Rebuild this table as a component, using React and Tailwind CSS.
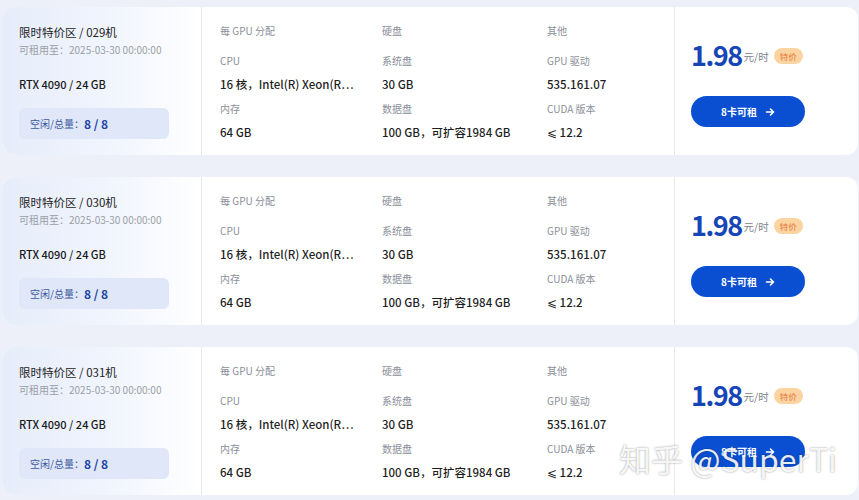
import React from 'react';

const cards = [
  { id: '029' },
  { id: '030' },
  { id: '031' },
];

function Spec({ label, value, className = '' }) {
  return (
    <div className={className}>
      <div className="text-[10px] leading-[14px] text-[#8b909a]">{label}</div>
      <div className="mt-[8px] text-[11.5px] leading-[16px] font-medium text-[#1f1f1f] whitespace-nowrap">{value}</div>
    </div>
  );
}

function MachineCard({ id }) {
  return (
    <div className="h-[148px] flex bg-white rounded-xl overflow-hidden">
      {/* left: machine info */}
      <div className="w-[199px] shrink-0 border-r border-[#e6e8ef] bg-gradient-to-r from-[#e6edfa] via-[#f0f4fd] to-white pl-4 pt-[17px] flex flex-col">
        <div className="text-[11.5px] leading-[16px] text-[#222]">限时特价区 / {id}机</div>
        <div className="mt-[3px] text-[10px] leading-[14px] text-[#9a9ea6]">可租用至：2025-03-30 00:00:00</div>
        <div className="mt-[19px] text-[11px] leading-[16px] font-medium text-[#1a1a1a]">RTX 4090 / 24 GB</div>
        <div className="mt-4 w-[150px] h-[31px] rounded-md bg-[#dfe7f8] flex items-center pl-[11px]">
          <span className="text-[10px] text-[#3d5aa0]">空闲/总量：</span>
          <span className="text-[12px] font-bold text-[#1c45a6]">8 / 8</span>
        </div>
      </div>

      {/* middle: specs */}
      <div className="w-[473px] shrink-0 border-r border-[#e6e8ef] pl-[18px] pt-[17px] flex">
        <div className="w-[162px]">
          <div className="text-[10px] leading-[14px] text-[#8b909a]">每 GPU 分配</div>
          <Spec className="mt-4" label="CPU" value="16 核，Intel(R) Xeon(R…" />
          <Spec className="mt-[10px]" label="内存" value="64 GB" />
        </div>
        <div className="w-[165px]">
          <div className="text-[10px] leading-[14px] text-[#8b909a]">硬盘</div>
          <Spec className="mt-4" label="系统盘" value="30 GB" />
          <Spec className="mt-[10px]" label="数据盘" value="100 GB，可扩容1984 GB" />
        </div>
        <div>
          <div className="text-[10px] leading-[14px] text-[#8b909a]">其他</div>
          <Spec className="mt-4" label="GPU 驱动" value="535.161.07" />
          <Spec className="mt-[10px]" label="CUDA 版本" value="⩽ 12.2" />
        </div>
      </div>

      {/* right: price */}
      <div className="flex-1 pl-4 pt-[33px] flex flex-col">
        <div className="flex items-center h-[30px]">
          <span className="text-[27px] leading-[30px] font-bold tracking-[-1.5px] text-[#1646b6]">1.98</span>
          <span className="ml-[2px] mt-[3px] text-[10.5px] text-[#7d828c]">元/时</span>
          <span className="ml-[5px] mt-[2px] h-[16px] px-[6px] rounded-full bg-[#fbd4a2] text-[8.5px] leading-[16px] text-[#e5773b]">特价</span>
        </div>
        <button className="mt-[26px] w-[114px] h-[31px] rounded-full bg-[#0a4fd1] text-white text-[10px] font-bold flex items-center justify-center gap-[8px]">
          <span>8卡可租</span>
          <svg width="10" height="10" viewBox="0 0 10 10" fill="none" stroke="currentColor" strokeWidth="1.6" strokeLinecap="round" strokeLinejoin="round">
            <path d="M1.5 5h7M5.5 2l3 3-3 3" />
          </svg>
        </button>
      </div>
    </div>
  );
}

export default function App() {
  return (
    <div
      className="relative w-[859px] h-[500px] overflow-hidden bg-[#eef0f9] pt-[7px] pl-[3px] pr-[1px] flex flex-col gap-[22px]"
      style={{ fontFamily: '"Noto Sans CJK SC", "Noto Sans", sans-serif' }}
    >
      {cards.map(c => (
        <MachineCard key={c.id} id={c.id} />
      ))}

      {/* watermark */}
      <div className="absolute left-[619px] top-[439px] text-[32px] leading-[38px] text-white/90 whitespace-nowrap [text-shadow:0_0_2px_rgba(0,0,0,0.45)]">
        知乎 @SuperTi
      </div>
    </div>
  );
}
